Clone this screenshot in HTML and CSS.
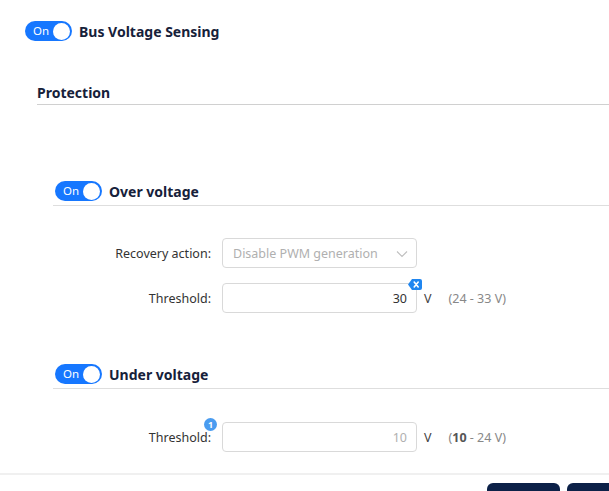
FILE: index.html
```html
<!DOCTYPE html>
<html lang="en">
<head>
    <meta charset="UTF-8">
    <meta name="viewport" content="width=device-width, initial-scale=1.0">
    <title>Bus Voltage Sensing</title>
    <link rel="stylesheet" href="styles.css">
</head>
<body>
    <div class="page">
        <div class="toggle-row main-toggle">
            <span class="switch"><span class="switch-text">On</span><span class="knob"></span></span>
            <span class="toggle-title">Bus Voltage Sensing</span>
        </div>

        <div class="section-title">Protection</div>

        <!-- Over voltage -->
        <div class="group over">
            <div class="toggle-row group-head">
                <span class="switch"><span class="switch-text">On</span><span class="knob"></span></span>
                <span class="toggle-title">Over voltage</span>
            </div>
            <div class="form-rows">
                <div class="form-row">
                    <label class="form-label">Recovery action:</label>
                    <div class="select disabled">
                        <span>Disable PWM generation</span>
                        <svg class="caret" width="12" height="8" viewBox="0 0 12 8"><path d="M1 1.5 L6 6.5 L11 1.5" fill="none" stroke="#bfbfbf" stroke-width="1.1"/></svg>
                    </div>
                </div>
                <div class="form-row">
                    <label class="form-label">Threshold:</label>
                    <div class="input-wrap">
                        <div class="input">30</div>
                        <svg class="clear-tag" width="14" height="11" viewBox="0 0 14 11">
                            <path d="M4 0 H12 Q14 0 14 2 V9 Q14 11 12 11 H4 L0 5.5 Z" fill="#1f86f0"/>
                            <path d="M6.2 3 L10.2 8 M10.2 3 L6.2 8" stroke="#fff" stroke-width="1.6" stroke-linecap="round"/>
                        </svg>
                    </div>
                    <span class="unit">V</span>
                    <span class="range">(24 - 33 V)</span>
                </div>
            </div>
        </div>

        <!-- Under voltage -->
        <div class="group under">
            <div class="toggle-row group-head">
                <span class="switch"><span class="switch-text">On</span><span class="knob"></span></span>
                <span class="toggle-title">Under voltage</span>
            </div>
            <div class="form-rows">
                <div class="form-row">
                    <label class="form-label">Threshold:<span class="count-badge">1</span></label>
                    <div class="input-wrap">
                        <div class="input disabled">10</div>
                    </div>
                    <span class="unit">V</span>
                    <span class="range">(<b>10</b> - 24 V)</span>
                </div>
            </div>
        </div>

        <div class="footer">
            <button class="btn"></button>
            <button class="btn"></button>
        </div>
    </div>
</body>
</html>
```

FILE: styles.css
```css
body {
    margin: 0;
    padding: 0;
    background: #fff;
    font-family: "Noto Sans", "Open Sans", Arial, sans-serif;
    color: #333;
}
.page {
    height: 491px;
    box-sizing: border-box;
    padding-top: 21px;
    overflow: hidden;
}
/* Toggles */
.toggle-row {
    display: flex;
    align-items: center;
    gap: 7px;
}
.main-toggle {
    padding-left: 25px;
}
.switch {
    display: flex;
    align-items: center;
    justify-content: space-between;
    width: 47px;
    height: 20px;
    box-sizing: border-box;
    padding: 0 2px 0 8px;
    background: #1677ff;
    border-radius: 10px;
}
.switch-text {
    color: #fff;
    font-size: 11.5px;
    line-height: 20px;
}
.knob {
    width: 17px;
    height: 17px;
    background: #fff;
    border-radius: 50%;
}
.toggle-title {
    font-size: 14px;
    font-weight: bold;
    color: #16213a;
}
/* Section */
.section-title {
    margin: 42px 0 0 37px;
    padding-bottom: 1px;
    font-size: 14px;
    line-height: 20px;
    font-weight: bold;
    color: #16213a;
    border-bottom: 1px solid #d0d0d0;
}
.group {
    margin-left: 53px;
}
.group.over {
    margin-top: 76px;
}
.group.under {
    margin-top: 51px;
}
.group-head {
    padding: 0 0 4px 2px;
    border-bottom: 1px solid #dedede;
}
.form-rows {
    display: flex;
    flex-direction: column;
    gap: 15px;
    padding-top: 32px;
}
.under .form-rows {
    padding-top: 33px;
}
.form-row {
    display: flex;
    align-items: center;
    height: 30px;
}
.form-label {
    position: relative;
    width: 158px;
    margin-right: 11px;
    text-align: right;
    font-size: 12.5px;
    color: #333;
}
.count-badge {
    position: absolute;
    right: -6px;
    top: -11px;
    width: 13px;
    height: 13px;
    border-radius: 50%;
    background: #4a9cf0;
    color: #fff;
    font-size: 9px;
    line-height: 13px;
    text-align: center;
    font-weight: bold;
}
.select,
.input {
    width: 195px;
    height: 30px;
    box-sizing: border-box;
    border: 1px solid #d9d9d9;
    border-radius: 4px;
    font-size: 12.5px;
    display: flex;
    align-items: center;
}
.select {
    justify-content: space-between;
    padding: 0 8px 0 10px;
    color: #b0b0b0;
}
.caret {
    margin-top: 1px;
}
.input-wrap {
    position: relative;
}
.input {
    justify-content: flex-end;
    padding-right: 9px;
    color: #333;
}
.input.disabled {
    color: #b0b0b0;
}
.clear-tag {
    position: absolute;
    right: -5px;
    top: -4px;
}
.unit {
    margin-left: 7px;
    font-size: 12.5px;
    color: #444;
}
.range {
    margin-left: 17px;
    font-size: 12.5px;
    color: #888;
}
.range b {
    color: #555;
}
/* Footer */
.footer {
    margin-top: 21px;
    padding-top: 8px;
    padding-left: 487px;
    display: flex;
    gap: 7px;
    overflow: hidden;
    border-top: 2px solid #f0f0f0;
}
.btn {
    flex-shrink: 0;
    width: 73px;
    height: 34px;
    border: none;
    border-radius: 6px;
    background: #0c2148;
}
```
